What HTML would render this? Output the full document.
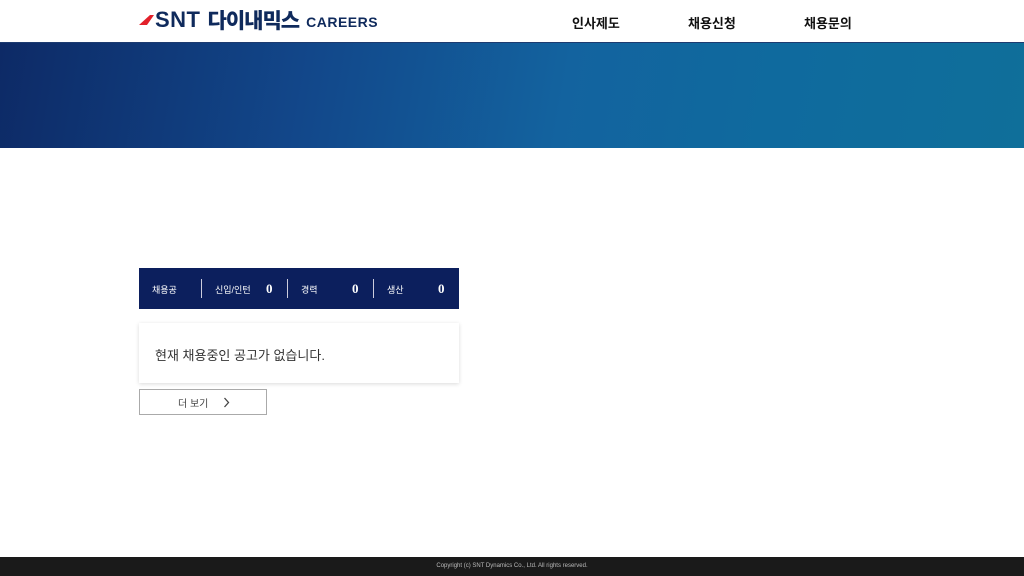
<!DOCTYPE html>
<html><head><meta charset="utf-8"><style>
*{margin:0;padding:0;box-sizing:border-box}
body{width:1024px;height:576px;overflow:hidden;background:#fff;font-family:"Liberation Sans","Noto Sans CJK KR",sans-serif;position:relative}
.hdr{position:absolute;top:0;left:0;width:1024px;height:43px;background:#fff;border-bottom:1px solid #1d3b70}
.logo{position:absolute;left:139px;top:8px;height:24px;display:flex;align-items:center;color:#0f2a5c}
.logo .s{font-weight:900;font-size:22px;letter-spacing:0.5px;margin-left:1px}
.logo .k{font-weight:900;font-size:21px;margin-left:7px;letter-spacing:-1px}
.logo .c{font-weight:700;font-size:14px;margin-left:7px;margin-top:4px;letter-spacing:0.5px}
.nav{position:absolute;top:13px;font-size:13px;font-weight:700;color:#111}
.hero{position:absolute;top:43px;left:0;width:1024px;height:105px;background:linear-gradient(100deg,#0d2a66 0%,#12478a 30%,#13639f 55%,#0f6a9e 75%,#0f6f9a 100%)}
.bar{position:absolute;left:139px;top:268px;width:320px;height:41px;background:#0c1f5d;color:#fff;font-size:9px}
.bar span{position:absolute;top:15px}
.bar b{position:absolute;top:13px;font-family:"Liberation Serif",serif;font-size:13px}
.bar i{position:absolute;top:11px;width:1px;height:19px;background:#ccd}
.card{position:absolute;left:139px;top:323px;width:320px;height:60px;background:#fff;box-shadow:0 1px 4px rgba(0,0,0,.15);font-size:13px;color:#333;padding:22px 0 0 16px}
.btn{position:absolute;left:139px;top:389px;width:128px;height:26px;border:1px solid #aaa;font-size:10px;color:#444}
.ft{position:absolute;left:0;top:557px;width:1024px;height:19px;background:#1a1a1a;color:#bbb;font-size:6px;text-align:center;line-height:19px}
</style></head><body>
<div class="hdr">
<div class="logo"><svg width="15" height="10" viewBox="0 0 15 10"><polygon points="11,0 15,0 8,10 0,10" fill="#e2202a"/></svg><span class="s">SNT</span><span class="k">다이내믹스</span><span class="c">CAREERS</span></div>
<div class="nav" style="left:572px">인사제도</div>
<div class="nav" style="left:688px">채용신청</div>
<div class="nav" style="left:804px">채용문의</div>
</div>
<div class="hero"></div>
<div class="bar">
<span style="left:13px">채용공</span><i style="left:62px"></i>
<span style="left:76px">신입/인턴</span><b style="left:127px">0</b><i style="left:148px"></i>
<span style="left:162px">경력</span><b style="left:213px">0</b><i style="left:234px"></i>
<span style="left:248px">생산</span><b style="left:299px">0</b>
</div>
<div class="card">현재 채용중인 공고가 없습니다.</div>
<div class="btn"><span style="position:absolute;left:38px;top:5px">더 보기</span><svg style="position:absolute;left:83px;top:7px" width="7" height="11" viewBox="0 0 7 11"><path d="M1.5 1 L5.5 5.5 L1.5 10" fill="none" stroke="#444" stroke-width="1.3"/></svg></div>
<div class="ft">Copyright (c) SNT Dynamics Co., Ltd. All rights reserved.</div>
</body></html>
